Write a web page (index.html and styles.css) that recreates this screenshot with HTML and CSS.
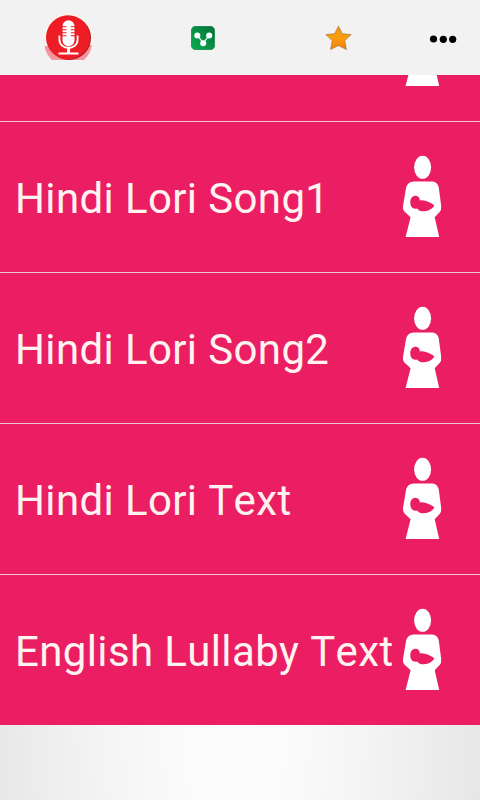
FILE: index.html
```html
<!DOCTYPE html>
<html lang="en">
<head>
<meta charset="utf-8">
<title>Lori Songs</title>
<link rel="stylesheet" href="styles.css">
</head>
<body>

  <svg class="defs" width="0" height="0">
    <symbol id="mother" viewBox="0 0 40 84">
      <ellipse cx="20.6" cy="13.3" rx="8.5" ry="11.5"/>
      <path d="M11.5 27.4H30.5Q35 27.8 36.7 33L39.2 52Q39.6 56 37.6 58L32.7 63.2L37.2 83.1H3.6L8.6 63.2L3 58Q0.6 56 1 52L4.2 33Q6 27.8 11.5 27.4Z"/>
      <path class="baby" d="M12.8 41.7C16.2 41.3 18 44 17.8 46.5C22.5 45.5 27.5 48 32.4 51.3C30.5 55 26.5 57.2 22 57.2C18.5 57.2 16.5 56.4 15.2 54.4C11 55.5 8.3 52.8 8.3 48.5C8.3 44.5 10.2 42 12.8 41.7Z"/>
    </symbol>
  </svg>

  <div class="screen">
    <div class="toolbar">
      <div class="tool mic">
        <svg width="54" height="50" viewBox="0 0 54 50">
          <defs>
            <clipPath id="micClip"><rect width="54" height="48"/></clipPath>
          </defs>
          <g clip-path="url(#micClip)">
            <circle cx="27.3" cy="25.5" r="24.4" fill="#fdf4ea"/>
            <path d="M3.5 34L51 33Q49.5 42 43 48H11Q5 42.5 3.5 34Z" fill="#f5949c"/>
            <circle cx="28" cy="26" r="22" fill="#ab1b22"/>
            <circle cx="27" cy="25.3" r="22" fill="#ee1c25"/>
          </g>
          <rect x="21.5" y="8.3" width="12" height="26" rx="6" fill="#fff"/>
          <path d="M21 14.8H25.5M29.8 14.8H34M21 17.8H25.5M29.8 17.8H34M21 20.8H25.5M29.8 20.8H34M21 23.8H25.5M29.8 23.8H34" stroke="#ee1c25" stroke-width="1.1"/>
          <path d="M18.4 23.5V27.5C18.4 38.500 36.6 38.500 36.6 27.5V23.5" fill="none" stroke="#fff" stroke-width="1.8"/>
          <path d="M27.5 35.500V41" stroke="#fff" stroke-width="3"/>
          <path d="M17.5 41.5H37.5" stroke="#fff" stroke-width="2"/>
        </svg>
      </div>
      <div class="tool">
        <svg width="24" height="24" viewBox="0 0 24 24">
          <defs>
            <linearGradient id="shareFill" x1="0" y1="1" x2="1" y2="0">
              <stop offset="0" stop-color="#0bae50"/>
              <stop offset="1" stop-color="#04713a"/>
            </linearGradient>
          </defs>
          <rect x="0.3" y="0.3" width="23.4" height="23.4" rx="4.5" fill="url(#shareFill)" stroke="#07783d" stroke-width="0.6"/>
          <path d="M6.5 9.7L12.3 17.2L18 9.7" fill="none" stroke="#fff" stroke-width="1.1"/>
          <circle cx="6.3" cy="9.5" r="3" fill="#fff"/>
          <circle cx="12.2" cy="17.2" r="3" fill="#fff"/>
          <circle cx="18.2" cy="9.5" r="3" fill="#fff"/>
        </svg>
      </div>
      <div class="tool">
        <svg width="28" height="28" viewBox="0 0 28 28">
          <defs>
            <linearGradient id="starFill" x1="0" y1="0" x2="0" y2="1">
              <stop offset="0" stop-color="#ef9210"/>
              <stop offset="0.5" stop-color="#fb9e0b"/>
              <stop offset="1" stop-color="#f07c0c"/>
            </linearGradient>
          </defs>
          <path d="M14.5 2L18.3 9.7L27.2 10.6L20.8 16.6L22.4 25.6L14.5 21.6L6.6 25.6L8.2 16.6L1.8 10.6L10.7 9.7Z" fill="url(#starFill)" stroke="#9b7233" stroke-width="0.6" stroke-linejoin="round"/>
        </svg>
      </div>
      <div class="tool more">
        <svg width="28" height="10" viewBox="0 0 28 10">
          <circle cx="4.5" cy="5" r="3.6"/>
          <circle cx="14.3" cy="5.3" r="3.6"/>
          <circle cx="23.7" cy="5.3" r="3.6"/>
        </svg>
      </div>
    </div>

    <div class="content">
      <div class="list">
        <div class="row">
          <span class="title"></span>
          <svg class="icon"><use href="#mother"/></svg>
        </div>
        <div class="row">
          <span class="title">Hindi Lori Song1</span>
          <svg class="icon"><use href="#mother"/></svg>
        </div>
        <div class="row">
          <span class="title">Hindi Lori Song2</span>
          <svg class="icon"><use href="#mother"/></svg>
        </div>
        <div class="row">
          <span class="title">Hindi Lori Text</span>
          <svg class="icon"><use href="#mother"/></svg>
        </div>
        <div class="row">
          <span class="title">English Lullaby Text</span>
          <svg class="icon"><use href="#mother"/></svg>
        </div>
      </div>
    </div>
  </div>

</body>
</html>
```

FILE: styles.css
```css
body {
  margin: 0;
  font-family: Roboto, sans-serif;
  overflow: hidden;
}

.defs {
  display: block;
}

.screen {
  display: flex;
  flex-direction: column;
  width: 480px;
  height: 800px;
}

.toolbar {
  display: flex;
  height: 75px;
  flex-shrink: 0;
  background: #f2f2f2;
}

.tool {
  display: flex;
  align-items: center;
  justify-content: center;
  width: 135px;
  padding-top: 1px;
  box-sizing: border-box;
}

.mic {
  padding-top: 0;
  padding-bottom: 1px;
}

.tool svg {
  display: block;
}

.more {
  width: 75px;
  padding-top: 3px;
  padding-left: 1px;
}

.content {
  flex: 1;
  overflow: hidden;
  background: radial-gradient(ellipse 310px 1870px at 235px 400px, #fdfdfd 0%, #fcfcfc 18%, #f4f4f4 45%, #e7e7e7 80%);
}

/* list is scrolled down past the first row */
.list {
  margin-top: -104px;
}

.row {
  display: flex;
  align-items: center;
  justify-content: space-between;
  height: 150px;
  padding: 0 38px 2px 15px;
  box-sizing: border-box;
  background: #eb1e63;
}

.row + .row {
  border-top: 1px solid #e8c9d2;
  height: 151px;
}

.title {
  padding-top: 6px;
  font-size: 42px;
  line-height: 50px;
  letter-spacing: 0.37px;
  font-kerning: none;
  white-space: nowrap;
  color: #fff3f0;
}

.icon {
  width: 40px;
  height: 84px;
  flex-shrink: 0;
  fill: #fff;
}

.baby {
  fill: #eb1e63;
}
```
